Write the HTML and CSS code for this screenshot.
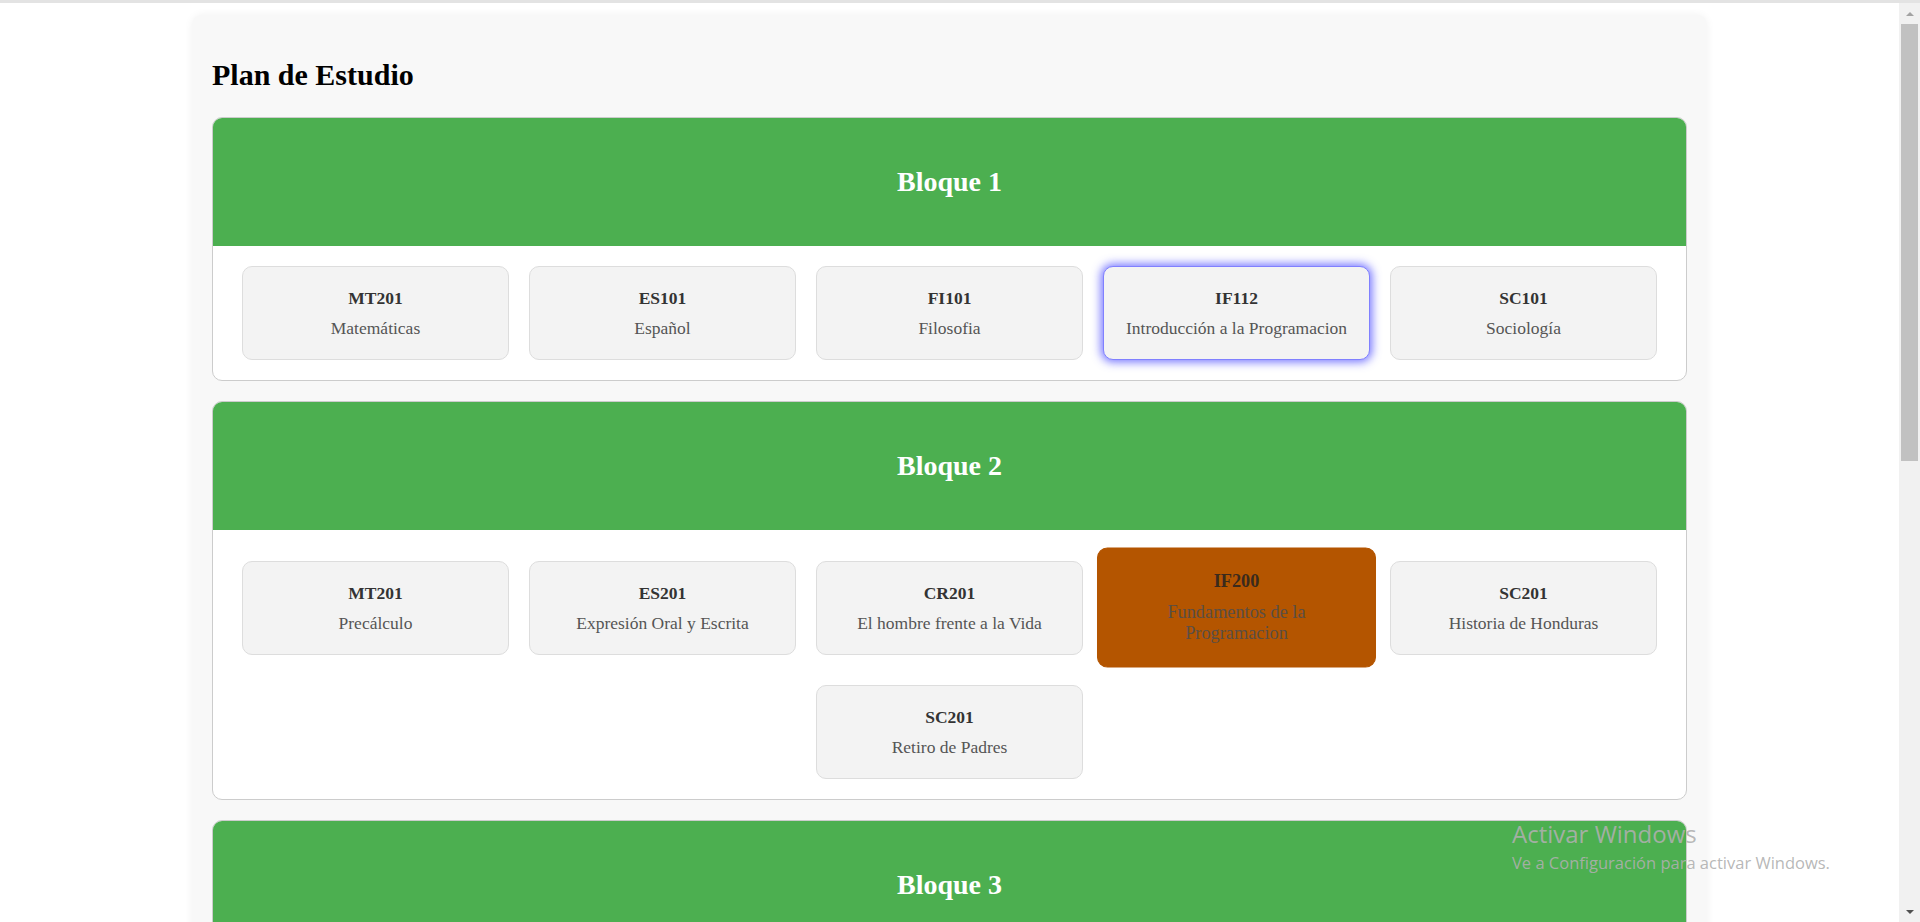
FILE: index.html
```html
<!DOCTYPE html>
<html lang="es">
<head>
<meta charset="utf-8">
<title>Plan de Estudio</title>
<link rel="stylesheet" href="styles.css">
</head>
<body>
<div class="screen">
  <div class="topline"></div>
  <div class="viewport">
    <div class="page">
      <div class="container">
        <h1 class="title">Plan de Estudio</h1>

        <section class="block">
          <h2 class="block-head">Bloque 1</h2>
          <div class="courses">
            <div class="course"><div class="code">MT201</div><div class="name">Matemáticas</div></div>
            <div class="course"><div class="code">ES101</div><div class="name">Español</div></div>
            <div class="course"><div class="code">FI101</div><div class="name">Filosofia</div></div>
            <div class="course glow"><div class="code">IF112</div><div class="name">Introducción a la Programacion</div></div>
            <div class="course"><div class="code">SC101</div><div class="name">Sociología</div></div>
          </div>
        </section>

        <section class="block">
          <h2 class="block-head">Bloque 2</h2>
          <div class="courses">
            <div class="course"><div class="code">MT201</div><div class="name">Precálculo</div></div>
            <div class="course"><div class="code">ES201</div><div class="name">Expresión Oral y Escrita</div></div>
            <div class="course"><div class="code">CR201</div><div class="name">El hombre frente a la Vida</div></div>
            <div class="course active"><div class="code">IF200</div><div class="name">Fundamentos de la Programacion</div></div>
            <div class="course"><div class="code">SC201</div><div class="name">Historia de Honduras</div></div>
            <div class="course"><div class="code">SC201</div><div class="name">Retiro de Padres</div></div>
          </div>
        </section>

        <section class="block">
          <h2 class="block-head">Bloque 3</h2>
        </section>
      </div>
    </div>
    <div class="scrollbar">
      <div class="sb-btn"><span class="arrow-up"></span></div>
      <div class="sb-thumb"></div>
      <div class="sb-track"></div>
      <div class="sb-btn"><span class="arrow-down"></span></div>
    </div>
  </div>
  <div class="watermark">
    <div class="wm-title">Activar Windows</div>
    <div class="wm-sub">Ve a Configuración para activar Windows.</div>
  </div>
</div>
</body>
</html>
```

FILE: styles.css
```css
html, body {
  margin: 0;
  padding: 0;
  background: #ffffff;
}

body {
  font-family: "Liberation Serif", "Times New Roman", serif;
  color: #000;
}

.screen {
  height: 922px;
  display: flex;
  flex-direction: column;
  overflow: hidden;
  position: relative;
}

.topline {
  height: 3px;
  background: #e3e3e3;
  flex: 0 0 auto;
}

.viewport {
  flex: 1 1 auto;
  display: flex;
  min-height: 0;
}

.page {
  flex: 1 1 auto;
  overflow: hidden;
  padding-top: 12px;
}

.container {
  width: 1515px;
  margin: 0 auto;
  box-sizing: border-box;
  background: #f8f8f8;
  border-radius: 10px;
  box-shadow: 0 0 8px rgba(0, 0, 0, 0.06);
  padding: 20px 20px 20px 20px;
}

.title {
  font-size: 30px;
  font-weight: bold;
  margin: 23px 0 25px;
  line-height: normal;
}

.block {
  background: #ffffff;
  border: 1px solid #cccccc;
  border-radius: 10px;
  overflow: hidden;
  margin-bottom: 20px;
}

.block-head {
  margin: 0;
  background: #4caf50;
  color: #ffffff;
  text-align: center;
  font-size: 28px;
  line-height: 32px;
  padding: 48px 0;
  font-weight: bold;
}

.courses {
  display: flex;
  flex-wrap: wrap;
  justify-content: center;
  align-items: center;
  padding: 10px;
}

.course {
  width: 267px;
  box-sizing: border-box;
  margin: 10px;
  padding: 21px 18px 21px;
  background: #f3f3f3;
  border: 1px solid #dddddd;
  border-radius: 10px;
  text-align: center;
  font-size: 17.5px;
}

.code {
  font-weight: bold;
  color: #333333;
  line-height: 20px;
}

.name {
  color: #555555;
  line-height: 20px;
  margin-top: 10px;
}

.course.glow {
  border-color: #8080ff;
  box-shadow: 0 0 10px 2px rgba(80, 80, 255, 0.8);
}

.course.active {
  background: #b45500;
  border-color: #b45500;
  padding-bottom: 22px;
  transform: scale(1.045);
}

.course.active .code {
  color: #3a2a1c;
}

.course.active .name {
  color: #5a4e44;
}

/* fake scrollbar */
.scrollbar {
  flex: 0 0 21px;
  background: #f1f1f1;
  display: flex;
  flex-direction: column;
  box-sizing: border-box;
  padding: 0 2px;
}

.sb-btn {
  height: 21px;
  flex: 0 0 21px;
  display: flex;
  align-items: center;
  justify-content: center;
}

.arrow-up {
  width: 0;
  height: 0;
  border-left: 4px solid transparent;
  border-right: 4px solid transparent;
  border-bottom: 4px solid #a3a3a3;
}

.arrow-down {
  width: 0;
  height: 0;
  border-left: 4px solid transparent;
  border-right: 4px solid transparent;
  border-top: 4px solid #505050;
}

.sb-thumb {
  height: 437px;
  flex: 0 0 437px;
  background: #c1c1c1;
}

.sb-track {
  flex: 1 1 auto;
}

/* Windows activation watermark (overlay) */
.watermark {
  position: absolute;
  left: 1512px;
  top: 818px;
  font-family: "Open Sans", "Noto Sans", sans-serif;
  color: rgba(175, 175, 175, 0.9);
  pointer-events: none;
}

.wm-title {
  font-size: 24px;
  line-height: 32px;
}

.wm-sub {
  font-size: 16.5px;
  line-height: 20px;
  margin-top: 3px;
}
```
